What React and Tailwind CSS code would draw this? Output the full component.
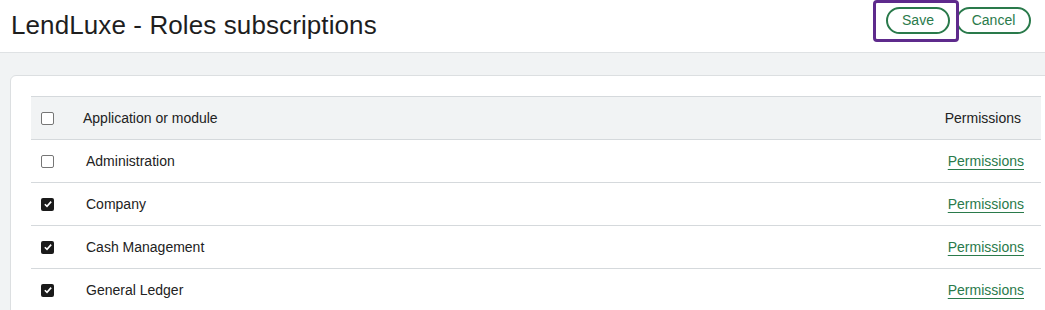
import React from "react";

const modules = [
  { name: "Administration", checked: false },
  { name: "Company", checked: true },
  { name: "Cash Management", checked: true },
  { name: "General Ledger", checked: true },
];

const Box = ({ checked }) =>
  checked ? (
    <span className="flex h-[13px] w-[13px] items-center justify-center rounded-[2px] bg-[#1a1a1a]">
      <svg viewBox="0 0 12 12" className="h-[10px] w-[10px]" aria-hidden="true">
        <path d="M2.2 6.3 4.8 8.8 9.8 3.2" fill="none" stroke="#fff" strokeWidth="2" />
      </svg>
    </span>
  ) : (
    <span className="block h-[13px] w-[13px] rounded-[2px] border border-[#767676] bg-white" />
  );

export default function App() {
  return (
    <div className="h-[310px] w-full overflow-hidden bg-[#f1f3f4] font-['Liberation_Sans',Arial,sans-serif] text-[#222]">
      {/* Header */}
      <div className="flex h-[53px] items-start justify-between border-b border-[#dfe2e4] bg-white pl-[11px] pr-[14px]">
        <h1 className="mt-[10px] text-[26px] leading-[30px] tracking-[0.1px] font-normal text-[#1e1e1e]">
          LendLuxe - Roles subscriptions
        </h1>
        <div className="mt-[7px] flex gap-[6px]">
          <button className="relative h-[27px] w-[64px] rounded-full border-2 border-[#2a7a4b] text-[14px] text-[#2a7a4b]">
            Save
            <span className="pointer-events-none absolute -top-[9px] -bottom-[10px] -left-[15px] -right-[11px] rounded-[4px] border-[3px] border-[#5e2a8c]" />
          </button>
          <button className="h-[27px] w-[75px] rounded-full border-2 border-[#2a7a4b] text-[14px] text-[#2a7a4b]">
            Cancel
          </button>
        </div>
      </div>

      {/* Card */}
      <div className="ml-[10px] mt-[22px] w-[1060px] rounded-tl-[6px] border border-[#dcdfe1] bg-white pl-[20px] pt-[20px]">
        <div className="w-[1010px] text-[14px]">
          <div className="flex h-[44px] items-center border-y border-[#d5d9dc] bg-[#f1f3f4] pl-[10px] pr-[20px]">
            <Box checked={false} />
            <span className="ml-[29px] flex-1">Application or module</span>
            <span>Permissions</span>
          </div>
          {modules.map((m) => (
            <div
              key={m.name}
              className="flex h-[43px] items-center border-b border-[#d5d9dc] pl-[10px] pr-[17px]"
            >
              <Box checked={m.checked} />
              <span className="ml-[32px] flex-1">{m.name}</span>
              <a href="#" className="text-[#2a7a4b] underline underline-offset-[3px]">
                Permissions
              </a>
            </div>
          ))}
        </div>
      </div>
    </div>
  );
}
